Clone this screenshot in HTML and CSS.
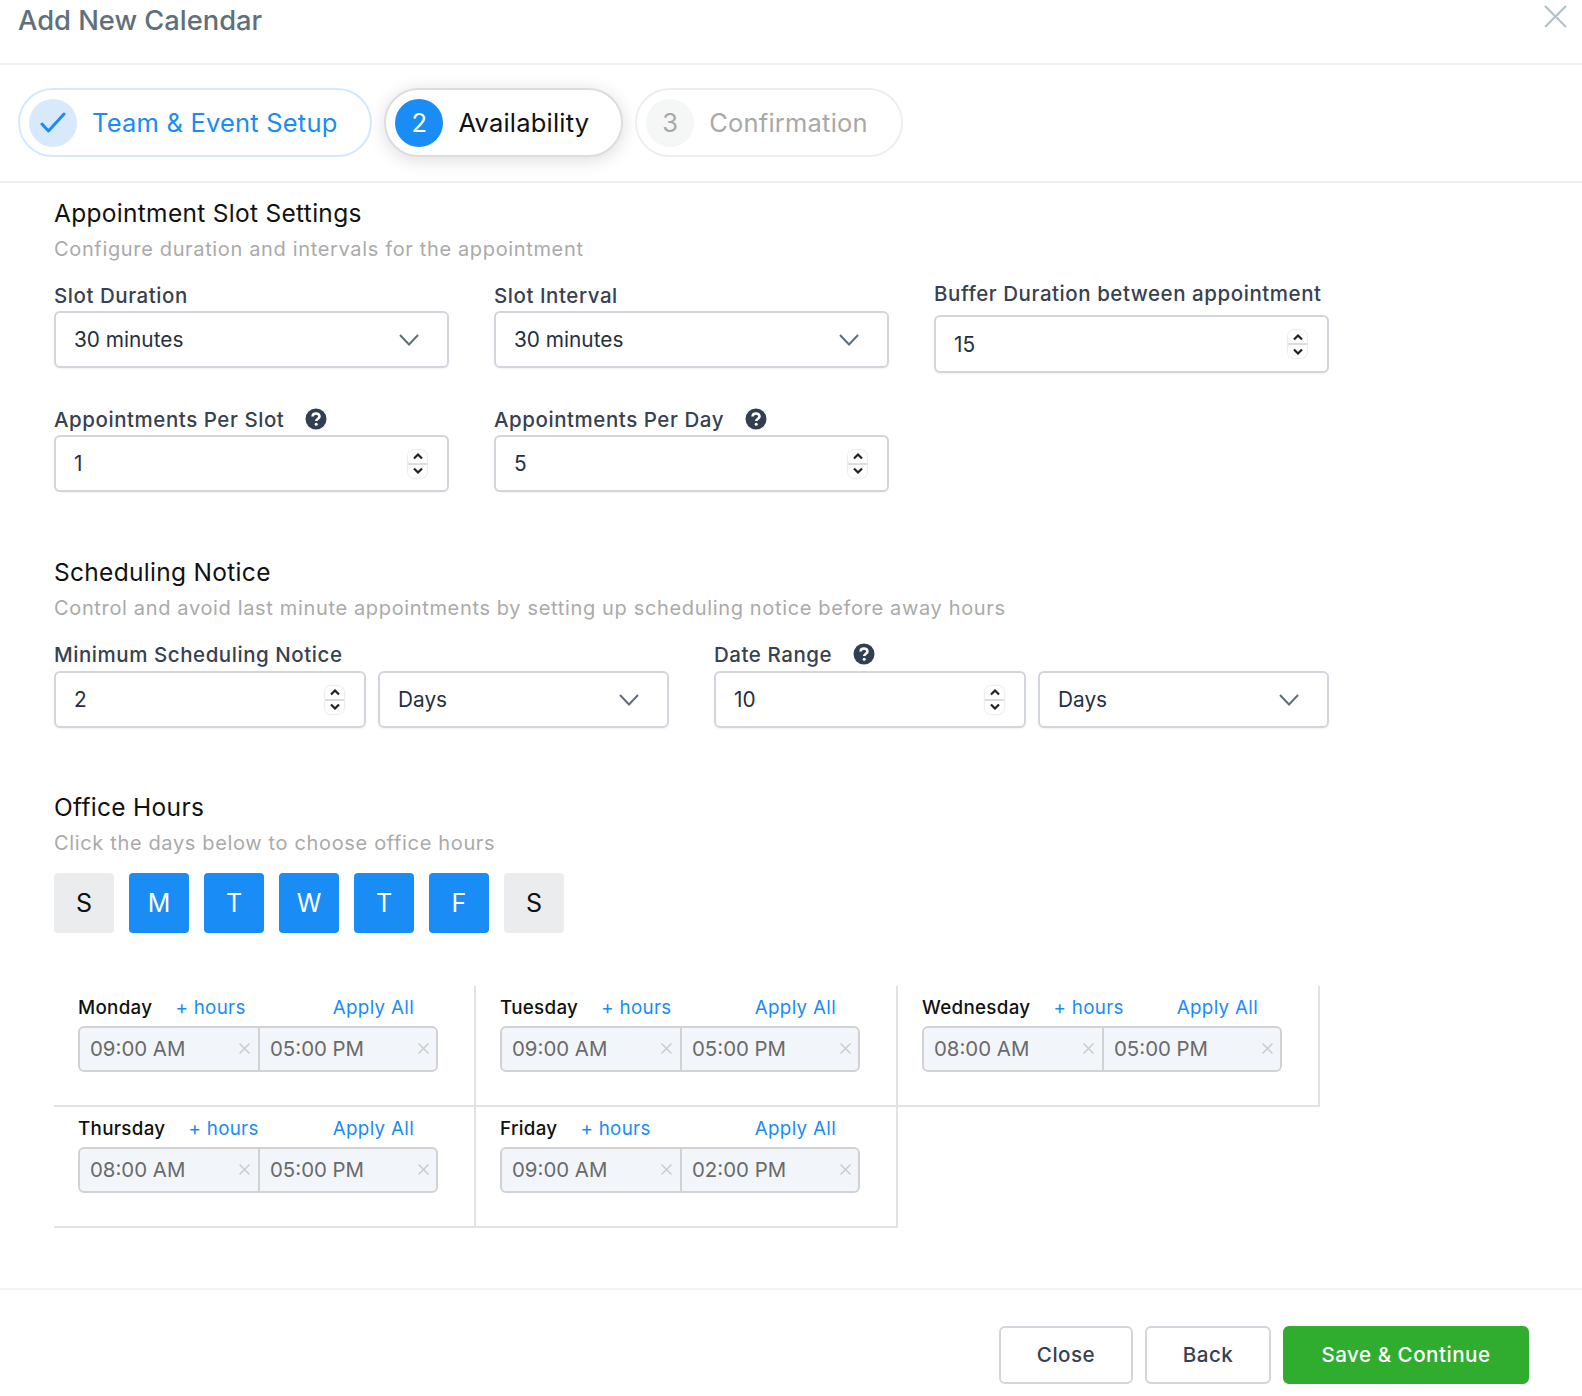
FILE: index.html
```html
<!DOCTYPE html>
<html lang="en">
<head>
    <meta charset="UTF-8">
    <meta name="viewport" content="width=device-width, initial-scale=1.0">
    <title>Add New Calendar</title>
    <link rel="stylesheet" href="styles.css">
</head>
<body>
    <svg class="defs" width="0" height="0">
        <symbol id="x-mark" viewBox="0 0 11 11"><path d="M0.500 0.500 L10.500 10.500 M10.500 0.500 L0.500 10.500"/></symbol>
    </svg>
    <div class="modal">
        <header class="modal-header">
            <h1>Add New Calendar</h1>
            <svg class="close-x" width="24" height="24" viewBox="0 0 24 24"><path d="M2 2 L23 23 M23 2 L2 23"/></svg>
        </header>

        <div class="stepper">
            <div class="step step-done">
                <span class="step-num"><svg width="26" height="22" viewBox="0 0 26 22"><path d="M2 12 L8.500 19 L24 2"/></svg></span>
                <span>Team &amp; Event Setup</span>
            </div>
            <div class="step step-active">
                <span class="step-num">2</span>
                <span>Availability</span>
            </div>
            <div class="step step-next">
                <span class="step-num">3</span>
                <span>Confirmation</span>
            </div>
        </div>

        <section class="slot-section">
            <h2>Appointment Slot Settings</h2>
            <p class="hint">Configure duration and intervals for the appointment</p>
            <div class="slot-grid">
                <div class="field">
                    <label>Slot Duration</label>
                    <div class="box">30 minutes
                        <svg class="chev" width="20" height="12" viewBox="0 0 20 12"><path d="M1 1 L10 10.500 L19 1"/></svg>
                    </div>
                </div>
                <div class="field">
                    <label>Slot Interval</label>
                    <div class="box">30 minutes
                        <svg class="chev" width="20" height="12" viewBox="0 0 20 12"><path d="M1 1 L10 10.500 L19 1"/></svg>
                    </div>
                </div>
                <div class="field field-buffer">
                    <label>Buffer Duration between appointment</label>
                    <div class="box">15
                        <span class="spin">
                            <svg width="10" height="7" viewBox="0 0 10 7"><path d="M1 5.500 L5 1.500 L9 5.500"/></svg>
                            <svg width="10" height="7" viewBox="0 0 10 7"><path d="M1 1.500 L5 5.500 L9 1.500"/></svg>
                        </span>
                    </div>
                </div>
                <div class="field">
                    <label>Appointments Per Slot
                        <svg class="help" width="22" height="22" viewBox="0 0 22 22"><circle cx="11" cy="11" r="10.500"/><path d="M7.600 8.600 C7.600 6.600 9.200 5.500 11 5.500 C13 5.500 14.500 6.700 14.500 8.500 C14.500 10.600 11.200 10.800 11.200 13"/><circle class="dot" cx="11.200" cy="16.200" r="1.500"/></svg>
                    </label>
                    <div class="box">1
                        <span class="spin">
                            <svg width="10" height="7" viewBox="0 0 10 7"><path d="M1 5.500 L5 1.500 L9 5.500"/></svg>
                            <svg width="10" height="7" viewBox="0 0 10 7"><path d="M1 1.500 L5 5.500 L9 1.500"/></svg>
                        </span>
                    </div>
                </div>
                <div class="field">
                    <label>Appointments Per Day
                        <svg class="help" width="22" height="22" viewBox="0 0 22 22"><circle cx="11" cy="11" r="10.500"/><path d="M7.600 8.600 C7.600 6.600 9.200 5.500 11 5.500 C13 5.500 14.500 6.700 14.500 8.500 C14.500 10.600 11.200 10.800 11.200 13"/><circle class="dot" cx="11.200" cy="16.200" r="1.500"/></svg>
                    </label>
                    <div class="box">5
                        <span class="spin">
                            <svg width="10" height="7" viewBox="0 0 10 7"><path d="M1 5.500 L5 1.500 L9 5.500"/></svg>
                            <svg width="10" height="7" viewBox="0 0 10 7"><path d="M1 1.500 L5 5.500 L9 1.500"/></svg>
                        </span>
                    </div>
                </div>
            </div>
        </section>

        <section class="notice-section">
            <h2>Scheduling Notice</h2>
            <p class="hint">Control and avoid last minute appointments by setting up scheduling notice before away hours</p>
            <div class="notice-grid">
                <div class="field">
                    <label>Minimum Scheduling Notice</label>
                    <div class="pair">
                        <div class="box">2
                            <span class="spin">
                                <svg width="10" height="7" viewBox="0 0 10 7"><path d="M1 5.500 L5 1.500 L9 5.500"/></svg>
                                <svg width="10" height="7" viewBox="0 0 10 7"><path d="M1 1.500 L5 5.500 L9 1.500"/></svg>
                            </span>
                        </div>
                        <div class="box">Days
                            <svg class="chev" width="20" height="12" viewBox="0 0 20 12"><path d="M1 1 L10 10.500 L19 1"/></svg>
                        </div>
                    </div>
                </div>
                <div class="field">
                    <label>Date Range
                        <svg class="help" width="22" height="22" viewBox="0 0 22 22"><circle cx="11" cy="11" r="10.500"/><path d="M7.600 8.600 C7.600 6.600 9.200 5.500 11 5.500 C13 5.500 14.500 6.700 14.500 8.500 C14.500 10.600 11.200 10.800 11.200 13"/><circle class="dot" cx="11.200" cy="16.200" r="1.500"/></svg>
                    </label>
                    <div class="pair">
                        <div class="box">10
                            <span class="spin">
                                <svg width="10" height="7" viewBox="0 0 10 7"><path d="M1 5.500 L5 1.500 L9 5.500"/></svg>
                                <svg width="10" height="7" viewBox="0 0 10 7"><path d="M1 1.500 L5 5.500 L9 1.500"/></svg>
                            </span>
                        </div>
                        <div class="box">Days
                            <svg class="chev" width="20" height="12" viewBox="0 0 20 12"><path d="M1 1 L10 10.500 L19 1"/></svg>
                        </div>
                    </div>
                </div>
            </div>
        </section>

        <section class="hours-section">
            <h2>Office Hours</h2>
            <p class="hint">Click the days below to choose office hours</p>
            <div class="days">
                <span class="day">S</span>
                <span class="day on">M</span>
                <span class="day on">T</span>
                <span class="day on">W</span>
                <span class="day on">T</span>
                <span class="day on">F</span>
                <span class="day">S</span>
            </div>
            <div class="hours-grid">
                <div class="hours-cell">
                    <div class="hours-top"><b>Monday</b><a>+ hours</a><a class="apply">Apply All</a></div>
                    <div class="times">
                        <div class="time">09:00 AM<svg class="x" width="11" height="11"><use href="#x-mark"/></svg></div>
                        <div class="time">05:00 PM<svg class="x" width="11" height="11"><use href="#x-mark"/></svg></div>
                    </div>
                </div>
                <div class="hours-cell">
                    <div class="hours-top"><b>Tuesday</b><a>+ hours</a><a class="apply">Apply All</a></div>
                    <div class="times">
                        <div class="time">09:00 AM<svg class="x" width="11" height="11"><use href="#x-mark"/></svg></div>
                        <div class="time">05:00 PM<svg class="x" width="11" height="11"><use href="#x-mark"/></svg></div>
                    </div>
                </div>
                <div class="hours-cell">
                    <div class="hours-top"><b>Wednesday</b><a>+ hours</a><a class="apply">Apply All</a></div>
                    <div class="times">
                        <div class="time">08:00 AM<svg class="x" width="11" height="11"><use href="#x-mark"/></svg></div>
                        <div class="time">05:00 PM<svg class="x" width="11" height="11"><use href="#x-mark"/></svg></div>
                    </div>
                </div>
                <div class="hours-cell">
                    <div class="hours-top"><b>Thursday</b><a>+ hours</a><a class="apply">Apply All</a></div>
                    <div class="times">
                        <div class="time">08:00 AM<svg class="x" width="11" height="11"><use href="#x-mark"/></svg></div>
                        <div class="time">05:00 PM<svg class="x" width="11" height="11"><use href="#x-mark"/></svg></div>
                    </div>
                </div>
                <div class="hours-cell">
                    <div class="hours-top"><b>Friday</b><a>+ hours</a><a class="apply">Apply All</a></div>
                    <div class="times">
                        <div class="time">09:00 AM<svg class="x" width="11" height="11"><use href="#x-mark"/></svg></div>
                        <div class="time">02:00 PM<svg class="x" width="11" height="11"><use href="#x-mark"/></svg></div>
                    </div>
                </div>
            </div>
        </section>

        <footer class="modal-footer">
            <button class="btn btn-close">Close</button>
            <button class="btn btn-back">Back</button>
            <button class="btn btn-save">Save &amp; Continue</button>
        </footer>
    </div>
</body>
</html>
```

FILE: styles.css
```css
* {
    box-sizing: border-box;
}
html, body {
    margin: 0;
    height: 1396px;
    overflow: hidden;
}
body {
    font-family: Inter, "Noto Sans", sans-serif;
    color: #374151;
    background: #fff;
}
.defs {
    position: absolute;
}

/* header */
.modal-header {
    height: 65px;
    padding: 5px 15px 0 18px;
    border-bottom: 2px solid #eef0f2;
    display: flex;
    justify-content: space-between;
    align-items: flex-start;
}
.modal-header h1 {
    margin: 0;
    font-size: 27.300px;
    line-height: 32px;
    font-weight: 500;
    color: #5f6f7b;
}
.close-x {
    margin-top: -1px;
}
.close-x path {
    stroke: #b4bfc5;
    stroke-width: 2;
    fill: none;
}

/* steps */
.stepper {
    height: 118px;
    padding: 23px 18px 0;
    border-bottom: 2px solid #eef0f2;
    display: flex;
    gap: 12px;
}
.step {
    height: 69px;
    padding: 0 33px 0 9px;
    border: 2px solid #eee;
    border-radius: 35px;
    display: flex;
    align-items: center;
    gap: 15px;
    font-size: 25.500px;
    letter-spacing: 0.2px;
    background: #fff;
}
.step-num {
    width: 48px;
    height: 48px;
    border-radius: 50%;
    display: flex;
    align-items: center;
    justify-content: center;
}
.step-done {
    border-color: #d6e9fc;
    color: #1a8cf5;
}
.step-done .step-num {
    background: #d8e9fb;
}
.step-done path {
    stroke: #1a8cf5;
    stroke-width: 3;
    stroke-linecap: round;
    stroke-linejoin: round;
    fill: none;
}
.step-active {
    padding-right: 32px;
    color: #111;
    border-color: #ddd;
    box-shadow: 0 3px 18px rgba(0, 0, 0, 0.14);
}
.step-active .step-num {
    background: #1a8cf5;
    color: #fff;
}
.step-next {
    color: #a8a8a8;
}
.step-next .step-num {
    background: #f5f6f6;
}

/* sections */
section {
    padding-left: 54px;
}
h2 {
    margin: 0;
    font-size: 24.500px;
    line-height: 30px;
    font-weight: 400;
    color: #111;
    letter-spacing: 0.3px;
}
.hint {
    margin: 7px 0 0;
    font-size: 20px;
    line-height: 28px;
    color: #aaa;
    letter-spacing: 0.65px;
}
.slot-section {
    padding-top: 15px;
}
.notice-section {
    padding-top: 65px;
}
.hours-section {
    padding-top: 64px;
}
.field label {
    display: block;
    height: 24px;
    margin-bottom: 3px;
    font-size: 20.500px;
    line-height: 24px;
    font-weight: 500;
    white-space: nowrap;
    letter-spacing: 0.55px;
}
.box {
    height: 57px;
    padding: 0 18px;
    border: 2px solid #d2d6dc;
    border-radius: 6px;
    background: #fff;
    display: flex;
    align-items: center;
    justify-content: space-between;
    font-size: 20.800px;
    color: #252f3f;
    box-shadow: 0 1px 2px rgba(0, 0, 0, 0.05);
}
.chev {
    margin-right: 10px;
}
.chev path {
    stroke: #5f6f7b;
    stroke-width: 2;
    fill: none;
}
.spin {
    width: 19px;
    height: 28px;
    margin-right: 2px;
    border-radius: 6px;
    box-shadow: 0 0 2px rgba(0, 0, 0, 0.25);
    display: flex;
    flex-direction: column;
    align-items: center;
    justify-content: space-around;
    background: linear-gradient(#fff 46%, #ddd 46%, #ddd 54%, #fff 54%);
}
.spin path {
    stroke: #222;
    stroke-width: 2.200;
    fill: none;
}
.help {
    margin-left: 15px;
    vertical-align: -3px;
}
.help circle {
    fill: #323f52;
}
.help path {
    stroke: #fff;
    stroke-width: 2.600;
    fill: none;
}
.help .dot {
    fill: #fff;
}
.slot-grid {
    margin-top: 21px;
    display: grid;
    grid-template-columns: repeat(3, 395px);
    column-gap: 45px;
    row-gap: 35px;
    align-items: start;
}
.field-buffer {
    margin-top: -2px;
}
.field-buffer label {
    margin-bottom: 9px;
}
.field-buffer .box {
    height: 58px;
}
.notice-grid {
    margin-top: 21px;
    width: 1275px;
    display: grid;
    grid-template-columns: 615px 615px;
    column-gap: 45px;
}
.notice-grid .field label {
    margin-bottom: 4px;
}
.pair {
    display: grid;
    grid-template-columns: 312px 291px;
    column-gap: 12px;
}

/* office hours */
.days {
    margin-top: 16px;
    display: flex;
    gap: 15px;
}
.day {
    width: 60px;
    height: 60px;
    border-radius: 4px;
    background: #ebecee;
    color: #111;
    font-size: 25px;
    display: flex;
    align-items: center;
    justify-content: center;
}
.day.on {
    background: #1a8cf5;
    color: #fff;
}
.hours-grid {
    margin-top: 53px;
    width: 1266px;
    display: grid;
    grid-template-columns: repeat(3, 422px);
    grid-auto-rows: 121px;
}
.hours-cell {
    padding: 8px 0 0 24px;
    border-right: 2px solid #e2e2e2;
    border-bottom: 2px solid #e2e2e2;
}
.hours-top {
    width: 336px;
    height: 26px;
    margin-bottom: 6px;
    display: flex;
    align-items: center;
    gap: 23px;
    font-size: 18.800px;
    letter-spacing: 0.3px;
    white-space: nowrap;
}
.hours-top b {
    font-weight: 500;
    color: #111;
}
.hours-top a {
    color: #1a8cf5;
}
.hours-top .apply {
    margin-left: auto;
}
.times {
    width: 360px;
    height: 46px;
    display: flex;
    border: 2px solid #d2d2d2;
    border-radius: 6px;
    background: #f2f6fa;
}
.time {
    flex: 1;
    padding: 0 8px 2px 10px;
    display: flex;
    align-items: center;
    justify-content: space-between;
    font-size: 20.400px;
    color: #6a6a6a;
}
.time:first-child {
    flex: 0 0 178px;
}
.time + .time {
    padding-right: 7px;
    border-left: 2px solid #d2d2d2;
}
.x {
    stroke: #cbcbcb;
    stroke-width: 1.500;
    fill: none;
}

/* footer */
.modal-footer {
    position: absolute;
    left: 0;
    right: 0;
    top: 1288px;
    padding: 36px 53px 0 0;
    border-top: 2px solid #f2f5f8;
    display: flex;
    justify-content: flex-end;
    gap: 12px;
}
.btn {
    height: 58px;
    padding-bottom: 2px;
    border: 2px solid #d2d6dc;
    border-radius: 6px;
    background: #fff;
    color: #374151;
    font: 500 20.600px Inter, sans-serif;
    letter-spacing: 0.5px;
}
.btn-close {
    width: 134px;
}
.btn-back {
    width: 126px;
}
.btn-save {
    width: 246px;
    background: #30ad2f;
    border-color: #30ad2f;
    color: #fff;
}
```
